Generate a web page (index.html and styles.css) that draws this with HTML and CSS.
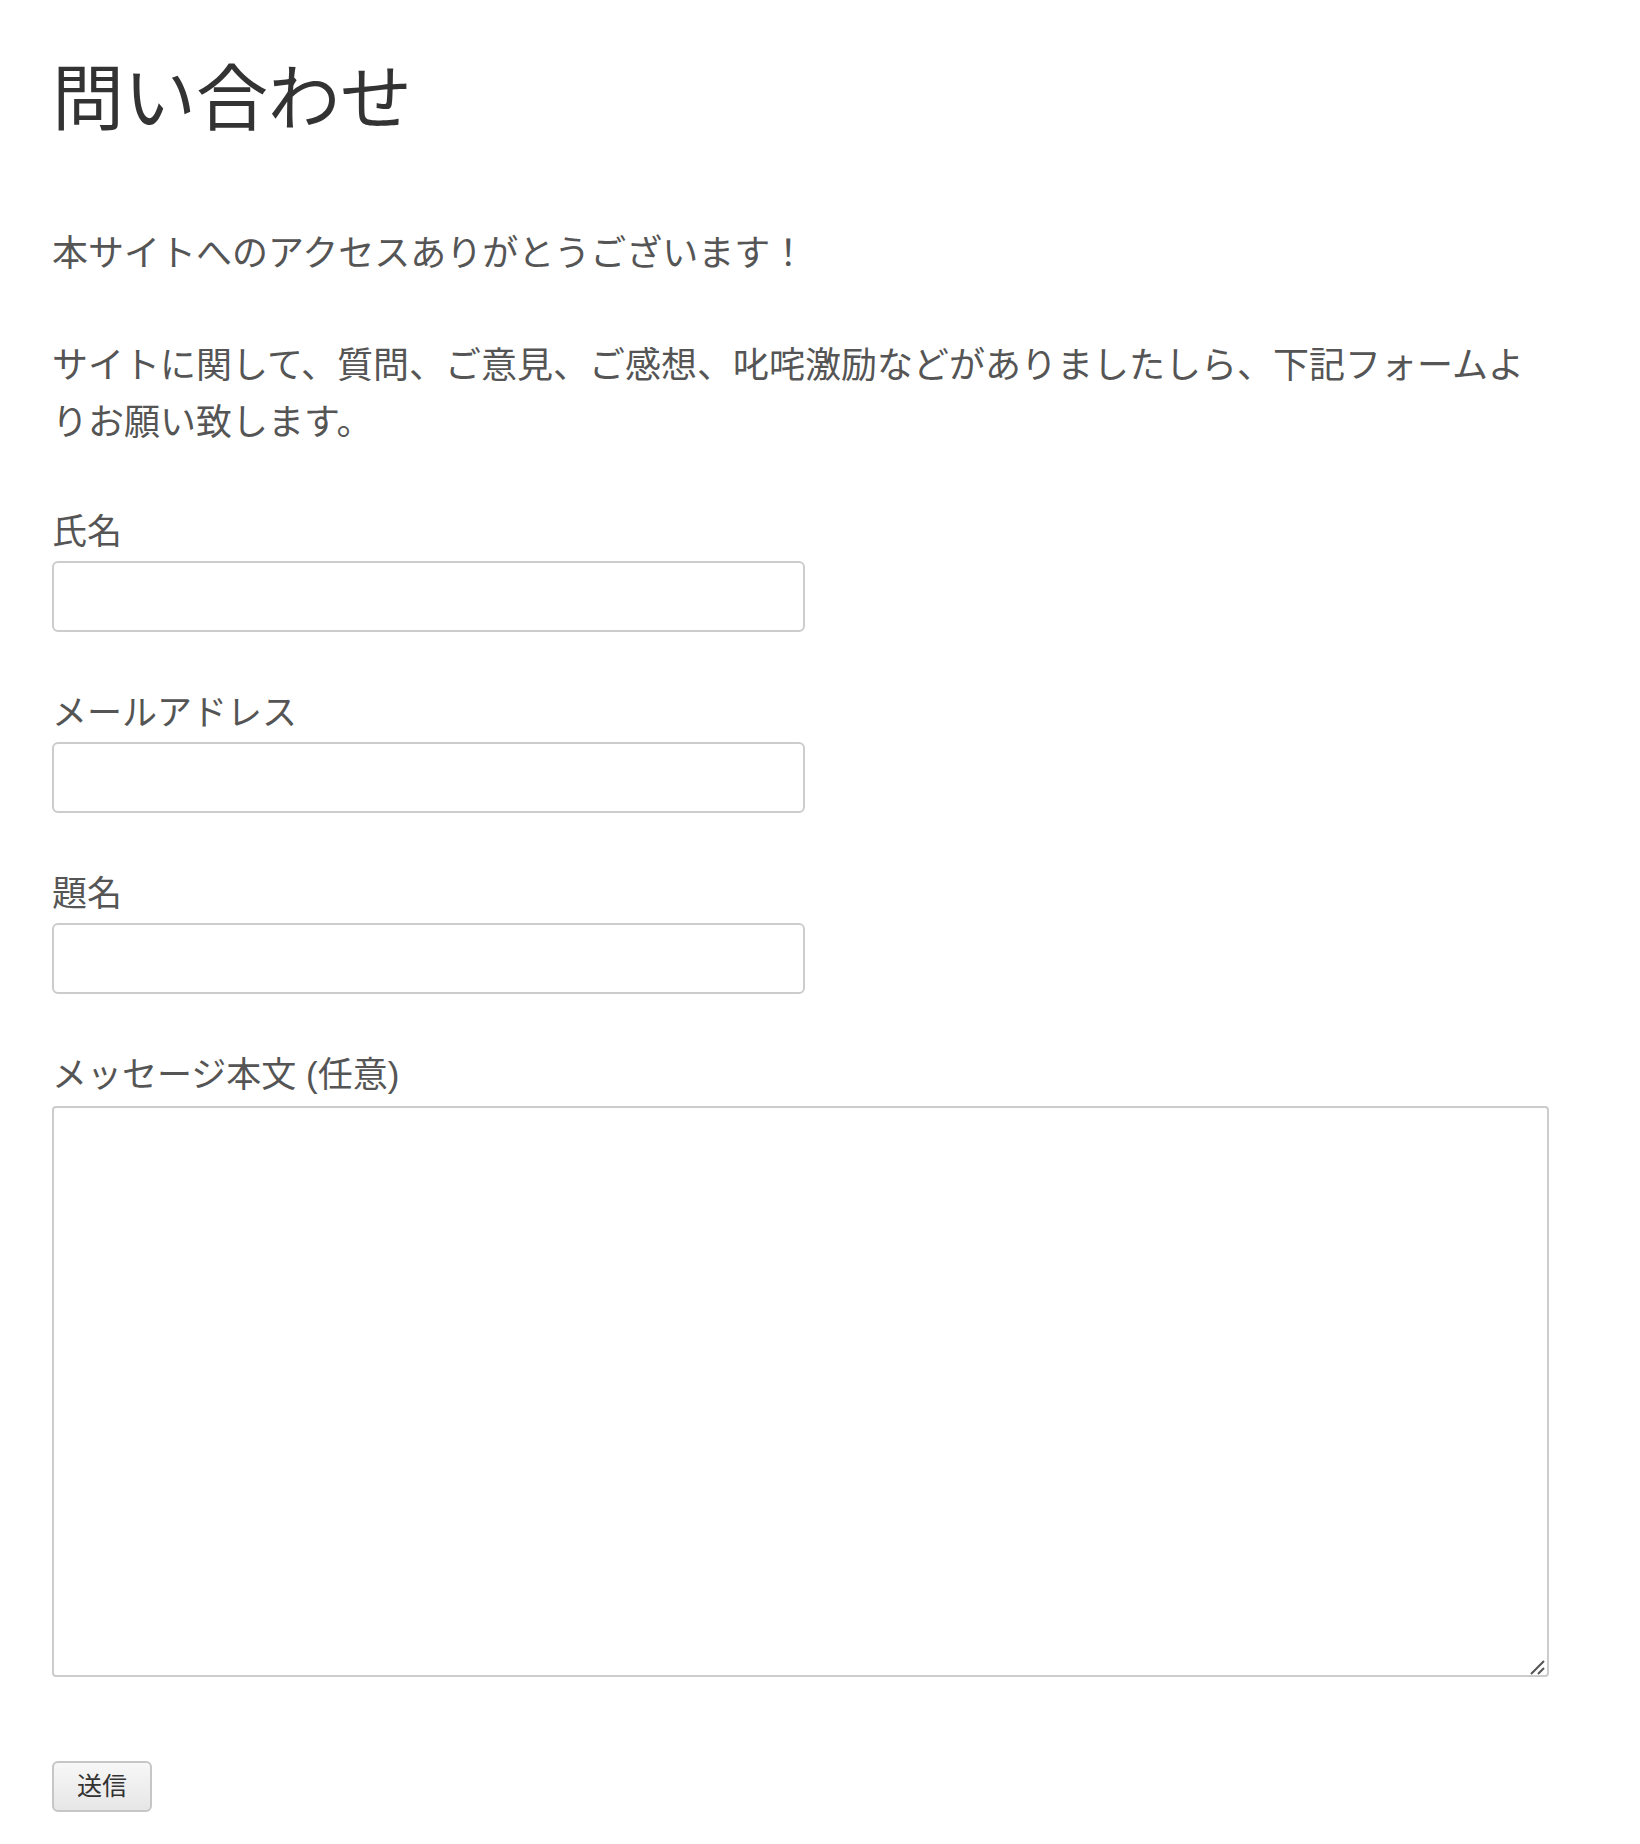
FILE: index.html
```html
<!DOCTYPE html>
<html lang="ja">
<head>
    <meta charset="UTF-8">
    <title>問い合わせ</title>
    <link rel="stylesheet" href="styles.css">
</head>
<body>
<div class="page">
    <h1 class="title">問い合わせ</h1>
    <p class="lead">本サイトへのアクセスありがとうございます！</p>
    <p class="lead">サイトに関して、質問、ご意見、ご感想、叱咤激励などがありましたしら、下記フォームよりお願い致します。</p>

    <form class="contact" action="javascript:;">
        <div class="field">
            <label for="name">氏名</label>
            <input type="text" id="name" class="box">
        </div>
        <div class="field">
            <label for="mail">メールアドレス</label>
            <input type="email" id="mail" class="box">
        </div>
        <div class="field">
            <label for="subject">題名</label>
            <input type="text" id="subject" class="box">
        </div>
        <div class="field field-message">
            <label for="message">メッセージ本文 (任意)</label>
            <div class="area-wrap">
                <textarea id="message" class="box area"></textarea>
                <!-- resize grip -->
                <svg class="grip" width="16" height="16" viewBox="0 0 16 16">
                    <path d="M1 15 L14 2 M8 15 L14 9" stroke="#555" stroke-width="2" fill="none"/>
                </svg>
            </div>
        </div>
        <div class="actions">
            <button type="submit" class="send">送信</button>
        </div>
    </form>
</div>
</body>
</html>
```

FILE: styles.css
```css
/* reset */
* {
    margin: 0;
    padding: 0;
}

body {
    font-family: "Liberation Sans", "Noto Sans CJK JP", sans-serif;
    color: #555;
    background: #fff;
}

.page {
    width: 1497px;
    margin-left: 52px;
    padding-top: 59px;
}

.title {
    font-size: 72px;
    line-height: 80px;
    font-weight: normal;
    color: #333;
    margin-bottom: 86px;
}

.lead {
    font-size: 36px;
    line-height: 57.6px;
    margin-bottom: 54px;
}

.contact {
    padding-top: 1px;
}

.field {
    margin-bottom: 56px;
}

.field label {
    display: block;
    font-size: 35px;
    line-height: 50px;
    margin-bottom: 4px;
}

.field-message label {
    margin-bottom: 6px;
}

/* text inputs */
.box {
    display: block;
    box-sizing: border-box;
    width: 753px;
    height: 71px;
    border: 2px solid #ccc;
    border-radius: 6px;
    background: #fff;
    font-family: inherit;
    font-size: 32px;
    padding: 0 12px;
    outline: none;
}

.area-wrap {
    position: relative;
    width: 1497px;
}

.area {
    width: 1497px;
    height: 571px;
    border-radius: 4px;
    padding: 12px;
    resize: none;
}

.grip {
    position: absolute;
    right: 3px;
    bottom: 2px;
    pointer-events: none;
}

.actions {
    padding-top: 28px;
}

.send {
    height: 51px;
    padding: 0 23px;
    font-family: inherit;
    font-size: 25px;
    line-height: 47px;
    color: #333;
    border: 2px solid #c6c6c6;
    border-radius: 6px;
    background: linear-gradient(#f7f7f7, #e6e6e6);
}
```
